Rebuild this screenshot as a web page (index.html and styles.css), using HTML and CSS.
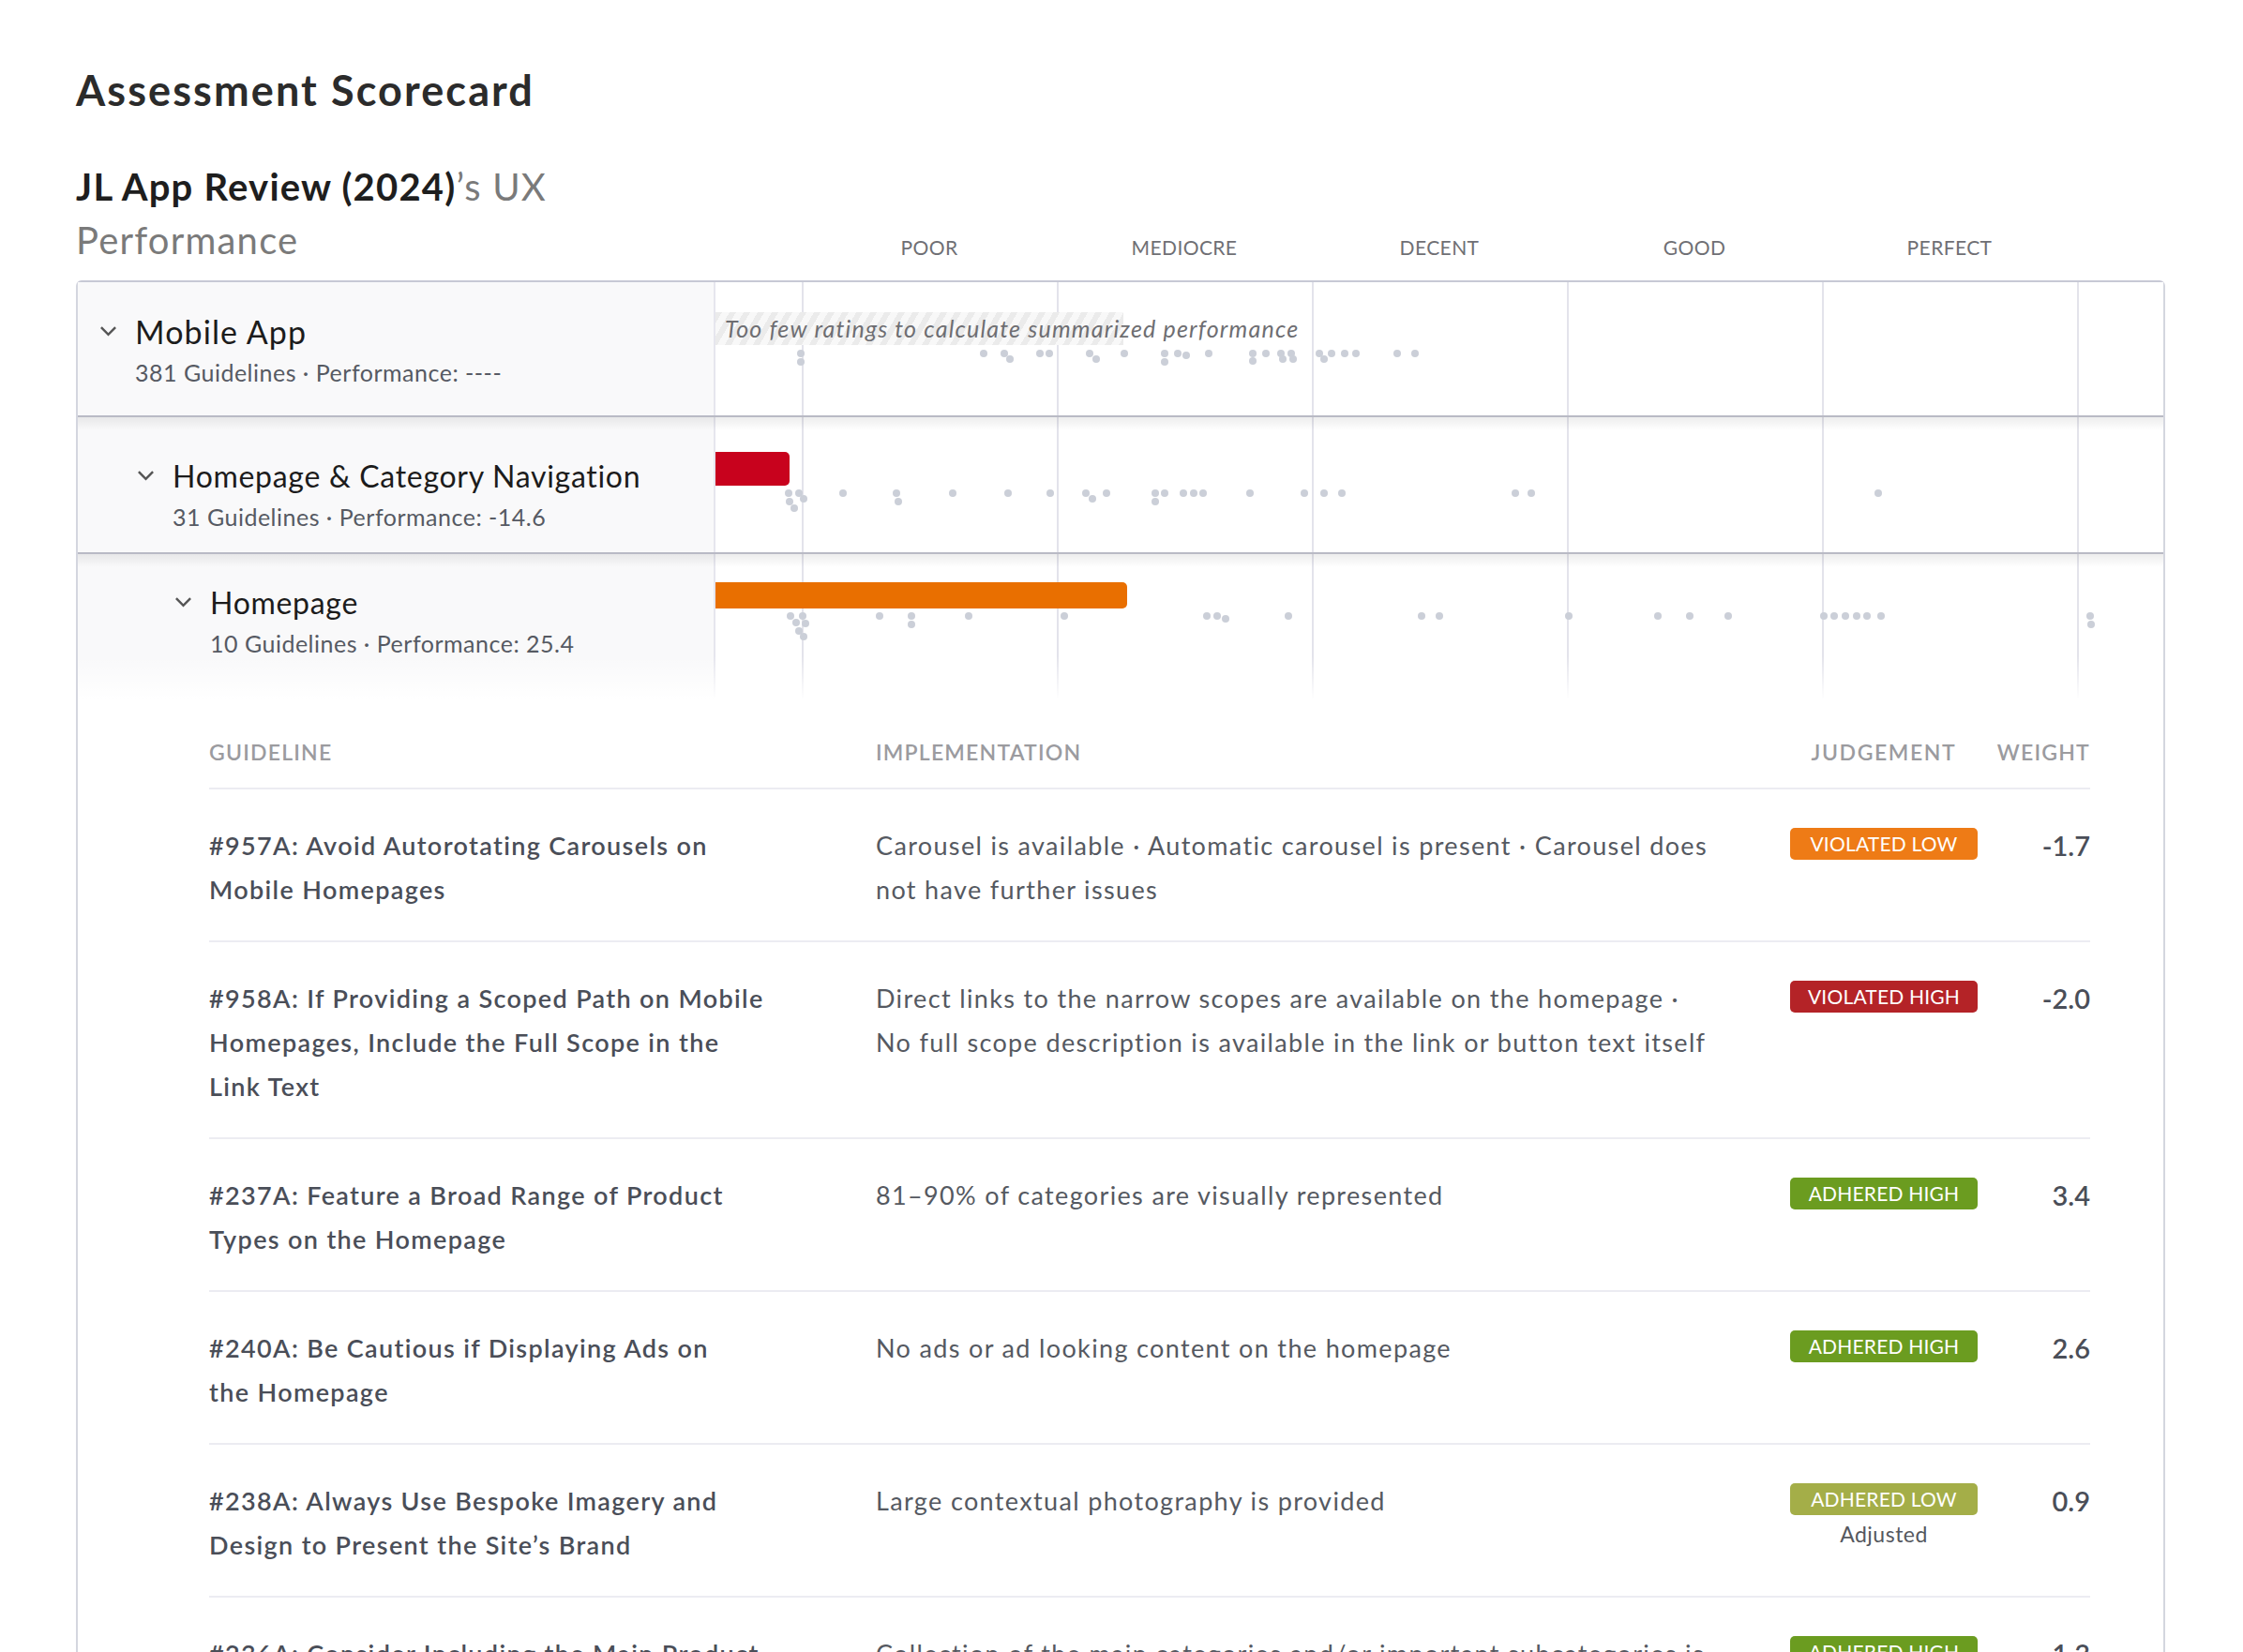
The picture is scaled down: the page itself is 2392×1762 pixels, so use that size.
FILE: index.html
```html
<!DOCTYPE html>
<html>
<head>
  <meta charset="utf-8">
  <meta name="viewport" content="width=device-width, initial-scale=1.0">
  <title>Assessment Scorecard</title>
  <link rel="stylesheet" href="styles.css">
</head>
<body>
  <div class="page">
    <h1 class="page-title">Assessment Scorecard</h1>

    <div class="header">
      <h2 class="subject"><strong>JL App Review (2024)</strong>’s UX Performance</h2>
      <div class="axis">
        <span></span>
        <span>Poor</span>
        <span>Mediocre</span>
        <span>Decent</span>
        <span>Good</span>
        <span>Perfect</span>
      </div>
    </div>

    <div class="card">
      <!-- Level 1: whole app -->
      <div class="level level-1">
        <div class="label">
          <div class="label-title">
            <svg class="chevron" width="20" height="12" viewBox="0 0 20 12"><polyline points="2,2 10,10 18,2"/></svg>
            <span>Mobile App</span>
          </div>
          <div class="label-sub">381 Guidelines · Performance: ----</div>
        </div>
        <div class="chart">
          <div class="no-score">Too few ratings to calculate summarized performance</div>
          <i class="dot" style="left:87px;top:72px"></i>
          <i class="dot" style="left:87px;top:81px"></i>
          <i class="dot" style="left:282px;top:72px"></i>
          <i class="dot" style="left:304px;top:72px"></i>
          <i class="dot" style="left:310px;top:78px"></i>
          <i class="dot" style="left:342px;top:72px"></i>
          <i class="dot" style="left:352px;top:72px"></i>
          <i class="dot" style="left:395px;top:72px"></i>
          <i class="dot" style="left:402px;top:78px"></i>
          <i class="dot" style="left:432px;top:72px"></i>
          <i class="dot" style="left:475px;top:72px"></i>
          <i class="dot" style="left:475px;top:81px"></i>
          <i class="dot" style="left:489px;top:72px"></i>
          <i class="dot" style="left:498px;top:74px"></i>
          <i class="dot" style="left:522px;top:72px"></i>
          <i class="dot" style="left:569px;top:72px"></i>
          <i class="dot" style="left:569px;top:80px"></i>
          <i class="dot" style="left:583px;top:72px"></i>
          <i class="dot" style="left:599px;top:72px"></i>
          <i class="dot" style="left:601px;top:78px"></i>
          <i class="dot" style="left:610px;top:72px"></i>
          <i class="dot" style="left:612px;top:78px"></i>
          <i class="dot" style="left:640px;top:72px"></i>
          <i class="dot" style="left:645px;top:78px"></i>
          <i class="dot" style="left:653px;top:72px"></i>
          <i class="dot" style="left:667px;top:72px"></i>
          <i class="dot" style="left:679px;top:72px"></i>
          <i class="dot" style="left:723px;top:72px"></i>
          <i class="dot" style="left:742px;top:72px"></i>
        </div>
      </div>

      <!-- Level 2: topic -->
      <div class="level level-2">
        <div class="label">
          <div class="label-title">
            <svg class="chevron" width="20" height="12" viewBox="0 0 20 12"><polyline points="2,2 10,10 18,2"/></svg>
            <span>Homepage &amp; Category Navigation</span>
          </div>
          <div class="label-sub">31 Guidelines · Performance: -14.6</div>
        </div>
        <div class="chart">
          <div class="bar bar-poor" style="width:79px"></div>
          <i class="dot" style="left:74px;top:77px"></i>
          <i class="dot" style="left:85px;top:77px"></i>
          <i class="dot" style="left:75px;top:86px"></i>
          <i class="dot" style="left:90px;top:83px"></i>
          <i class="dot" style="left:80px;top:93px"></i>
          <i class="dot" style="left:132px;top:77px"></i>
          <i class="dot" style="left:189px;top:77px"></i>
          <i class="dot" style="left:191px;top:86px"></i>
          <i class="dot" style="left:249px;top:77px"></i>
          <i class="dot" style="left:308px;top:77px"></i>
          <i class="dot" style="left:353px;top:77px"></i>
          <i class="dot" style="left:391px;top:77px"></i>
          <i class="dot" style="left:398px;top:83px"></i>
          <i class="dot" style="left:413px;top:77px"></i>
          <i class="dot" style="left:465px;top:77px"></i>
          <i class="dot" style="left:465px;top:86px"></i>
          <i class="dot" style="left:475px;top:77px"></i>
          <i class="dot" style="left:495px;top:77px"></i>
          <i class="dot" style="left:506px;top:77px"></i>
          <i class="dot" style="left:516px;top:77px"></i>
          <i class="dot" style="left:566px;top:77px"></i>
          <i class="dot" style="left:624px;top:77px"></i>
          <i class="dot" style="left:645px;top:77px"></i>
          <i class="dot" style="left:664px;top:77px"></i>
          <i class="dot" style="left:849px;top:77px"></i>
          <i class="dot" style="left:866px;top:77px"></i>
          <i class="dot" style="left:1236px;top:77px"></i>
        </div>
      </div>

      <!-- Level 3: section -->
      <div class="level level-3">
        <div class="label">
          <div class="label-title">
            <svg class="chevron" width="20" height="12" viewBox="0 0 20 12"><polyline points="2,2 10,10 18,2"/></svg>
            <span>Homepage</span>
          </div>
          <div class="label-sub">10 Guidelines · Performance: 25.4</div>
        </div>
        <div class="chart">
          <div class="bar bar-mediocre" style="width:439px"></div>
          <i class="dot" style="left:76px;top:62px"></i>
          <i class="dot" style="left:89px;top:62px"></i>
          <i class="dot" style="left:82px;top:69px"></i>
          <i class="dot" style="left:92px;top:70px"></i>
          <i class="dot" style="left:85px;top:78px"></i>
          <i class="dot" style="left:90px;top:84px"></i>
          <i class="dot" style="left:171px;top:62px"></i>
          <i class="dot" style="left:205px;top:62px"></i>
          <i class="dot" style="left:205px;top:71px"></i>
          <i class="dot" style="left:266px;top:62px"></i>
          <i class="dot" style="left:368px;top:62px"></i>
          <i class="dot" style="left:520px;top:62px"></i>
          <i class="dot" style="left:531px;top:62px"></i>
          <i class="dot" style="left:540px;top:65px"></i>
          <i class="dot" style="left:607px;top:62px"></i>
          <i class="dot" style="left:749px;top:62px"></i>
          <i class="dot" style="left:768px;top:62px"></i>
          <i class="dot" style="left:906px;top:62px"></i>
          <i class="dot" style="left:1001px;top:62px"></i>
          <i class="dot" style="left:1035px;top:62px"></i>
          <i class="dot" style="left:1076px;top:62px"></i>
          <i class="dot" style="left:1178px;top:62px"></i>
          <i class="dot" style="left:1189px;top:62px"></i>
          <i class="dot" style="left:1201px;top:62px"></i>
          <i class="dot" style="left:1213px;top:62px"></i>
          <i class="dot" style="left:1224px;top:62px"></i>
          <i class="dot" style="left:1239px;top:62px"></i>
          <i class="dot" style="left:1462px;top:62px"></i>
          <i class="dot" style="left:1463px;top:71px"></i>
        </div>
      </div>

      <!-- Guidelines of the open section -->
      <div class="guidelines">
        <div class="g-head">
          <div>Guideline</div>
          <div>Implementation</div>
          <div class="g-judgement">Judgement</div>
          <div class="g-weight">Weight</div>
        </div>

        <div class="g-row">
          <div class="g-title">#957A: Avoid Autorotating Carousels on Mobile&nbsp;Homepages</div>
          <div class="g-impl">Carousel is available · Automatic carousel is present · Carousel does not have further&nbsp;issues</div>
          <div class="g-judgement"><span class="badge violated-low">Violated Low</span></div>
          <div class="g-weight">-1.7</div>
        </div>

        <div class="g-row">
          <div class="g-title">#958A: If Providing a Scoped Path on Mobile Homepages, Include the Full Scope in the Link&nbsp;Text</div>
          <div class="g-impl">Direct links to the narrow scopes are available on the homepage · No&nbsp;full scope description is available in the link or button text&nbsp;itself</div>
          <div class="g-judgement"><span class="badge violated-high">Violated High</span></div>
          <div class="g-weight">-2.0</div>
        </div>

        <div class="g-row">
          <div class="g-title">#237A: Feature a Broad Range of Product Types on the&nbsp;Homepage</div>
          <div class="g-impl">81–90% of categories are visually represented</div>
          <div class="g-judgement"><span class="badge adhered-high">Adhered High</span></div>
          <div class="g-weight">3.4</div>
        </div>

        <div class="g-row">
          <div class="g-title">#240A: Be Cautious if Displaying Ads on the&nbsp;Homepage</div>
          <div class="g-impl">No ads or ad looking content on the homepage</div>
          <div class="g-judgement"><span class="badge adhered-high">Adhered High</span></div>
          <div class="g-weight">2.6</div>
        </div>

        <div class="g-row">
          <div class="g-title">#238A: Always Use Bespoke Imagery and Design to Present the Site’s&nbsp;Brand</div>
          <div class="g-impl">Large contextual photography is provided</div>
          <div class="g-judgement">
            <span class="badge adhered-low">Adhered Low</span>
            <div class="adjusted">Adjusted</div>
          </div>
          <div class="g-weight">0.9</div>
        </div>

        <div class="g-row">
          <div class="g-title">#236A: Consider Including the Main Product Categories on the&nbsp;Homepage</div>
          <div class="g-impl">Collection of the main categories and/or important subcategories is available on the&nbsp;homepage</div>
          <div class="g-judgement"><span class="badge adhered-high">Adhered High</span></div>
          <div class="g-weight">1.3</div>
        </div>
      </div>
    </div>
  </div>
</body>
</html>
```

FILE: styles.css
```css
body {
  margin: 0;
  padding: 0;
  font-family: "Lato", "Liberation Sans", sans-serif;
  color: #222;
  background-color: #fff;
}

.page {
  padding: 70px 83px 0 81px;
}

.page-title {
  margin: 0;
  font-size: 45px;
  line-height: 52px;
  font-weight: 700;
  letter-spacing: 2.1px;
  color: #2b2b2b;
}

/* Subject name + rating scale */

.header {
  display: flex;
  align-items: flex-end;
  margin-top: 49px;
}

.subject {
  width: 680px;
  margin: 0;
  font-size: 40px;
  line-height: 57px;
  font-weight: 400;
  letter-spacing: 1.2px;
  color: #7a7a7a;
}

.subject strong {
  font-weight: 700;
  color: #1e1e1e;
}

.axis {
  flex: 1;
  display: grid;
  grid-template-columns: 94px repeat(5, 272px);
  padding-bottom: 9px;
  font-size: 21px;
  line-height: 25px;
  letter-spacing: 0.4px;
  color: #6f6f74;
  text-transform: uppercase;
  text-align: center;
}

/* Card with the performance levels */

.card {
  margin-top: 14px;
  border: 2px solid #d4d6df;
  border-top-color: #c7c9d5;
  border-bottom: none;
  border-radius: 6px 6px 0 0;
}

.level {
  position: relative;
  display: grid;
  grid-template-columns: 678px 1fr;
}

.level-2,
.level-3 {
  border-top: 2px solid #b9bac5;
}

.level-2::before,
.level-3::before {
  content: "";
  position: absolute;
  left: 0;
  right: 0;
  top: 0;
  height: 14px;
  background: linear-gradient(rgba(0, 0, 0, 0.07), rgba(0, 0, 0, 0));
  pointer-events: none;
  z-index: 2;
}

.level-3::after {
  content: "";
  position: absolute;
  left: 0;
  right: 0;
  bottom: 0;
  height: 46px;
  background: linear-gradient(rgba(255, 255, 255, 0), #fff);
  pointer-events: none;
  z-index: 2;
}

.label {
  background-color: #f9f9fa;
}

.level-1 .label {
  padding: 33px 0 28px 23px;
}

.level-2 .label {
  padding: 43px 0 20px 63px;
}

.level-3 .label {
  padding: 32px 0 42px 103px;
}

.label-title {
  display: flex;
  align-items: center;
  gap: 19px;
  font-size: 32px;
  line-height: 40px;
  letter-spacing: 0.7px;
  color: #1c1c1c;
}

.level-1 .label-title {
  font-size: 34px;
  letter-spacing: 1.1px;
}

.chevron {
  flex: none;
  width: 19px;
  height: 12px;
  margin-top: -3px;
  fill: none;
  stroke: #555;
  stroke-width: 2.6;
}

.label-sub {
  margin-top: 5px;
  padding-left: 38px;
  font-size: 25px;
  line-height: 36px;
  letter-spacing: 0.5px;
  color: #565a63;
}

.chart {
  position: relative;
  border-left: 2px solid #e6e6ee;
  background-color: #fff;
  background-image: linear-gradient(to right, #e3e3eb 0, #e3e3eb 2px, transparent 2px);
  background-size: 272px 100%;
  background-position: 92px 0;
}

.no-score {
  width: 425px;
  height: 35px;
  margin-top: 32px;
  padding-left: 10px;
  font-size: 25px;
  line-height: 35px;
  font-style: italic;
  letter-spacing: 1.2px;
  color: #6e6e72;
  white-space: nowrap;
  background-image: repeating-linear-gradient(120deg, #ebebeb 0, #ebebeb 6px, #f8f8f8 6px, #f8f8f8 13px);
}

.bar {
  border-radius: 0 5px 5px 0;
}

.bar-poor {
  height: 36px;
  margin-top: 37px;
  background-color: #c8021d;
}

.bar-mediocre {
  height: 28px;
  margin-top: 30px;
  background-color: #e96f00;
}

.dot {
  position: absolute;
  width: 8px;
  height: 8px;
  border-radius: 50%;
  background-color: #cbcfd8;
}

/* Guideline table */

.guidelines {
  padding: 41px 78px 0 140px;
}

.g-head,
.g-row {
  display: grid;
  grid-template-columns: 711px 1fr 200px 120px;
}

.g-head {
  padding-bottom: 23px;
  font-size: 23px;
  line-height: 30px;
  font-weight: 600;
  letter-spacing: 1.2px;
  color: #9b9b9f;
  text-transform: uppercase;
}

.g-row {
  border-top: 2px solid #ececf2;
  padding: 36px 0 31px;
  font-size: 27px;
  line-height: 47px;
  letter-spacing: 1.35px;
}

.g-title {
  padding-right: 86px;
  font-weight: 600;
  color: #4a4e58;
}

.g-impl {
  padding-right: 60px;
  color: #555961;
}

.g-judgement {
  text-align: center;
}

.g-weight {
  text-align: right;
}

.g-head .g-judgement {
  letter-spacing: 1.6px;
}

.g-row .g-weight {
  font-size: 29px;
  font-weight: 600;
  letter-spacing: 0;
  color: #4a4e58;
}

.badge {
  display: block;
  height: 34px;
  margin-top: 5px;
  border-radius: 5px;
  font-size: 21px;
  line-height: 34px;
  letter-spacing: 0.2px;
  color: #fff;
  text-transform: uppercase;
}

.violated-low {
  background-color: #ee7b16;
}

.violated-high {
  background-color: #b42327;
}

.adhered-high {
  background-color: #6b9c20;
}

.adhered-low {
  background-color: #a4ae48;
}

.adjusted {
  margin-top: 5px;
  font-size: 23px;
  line-height: 30px;
  letter-spacing: 0.5px;
  color: #55585e;
}
```
